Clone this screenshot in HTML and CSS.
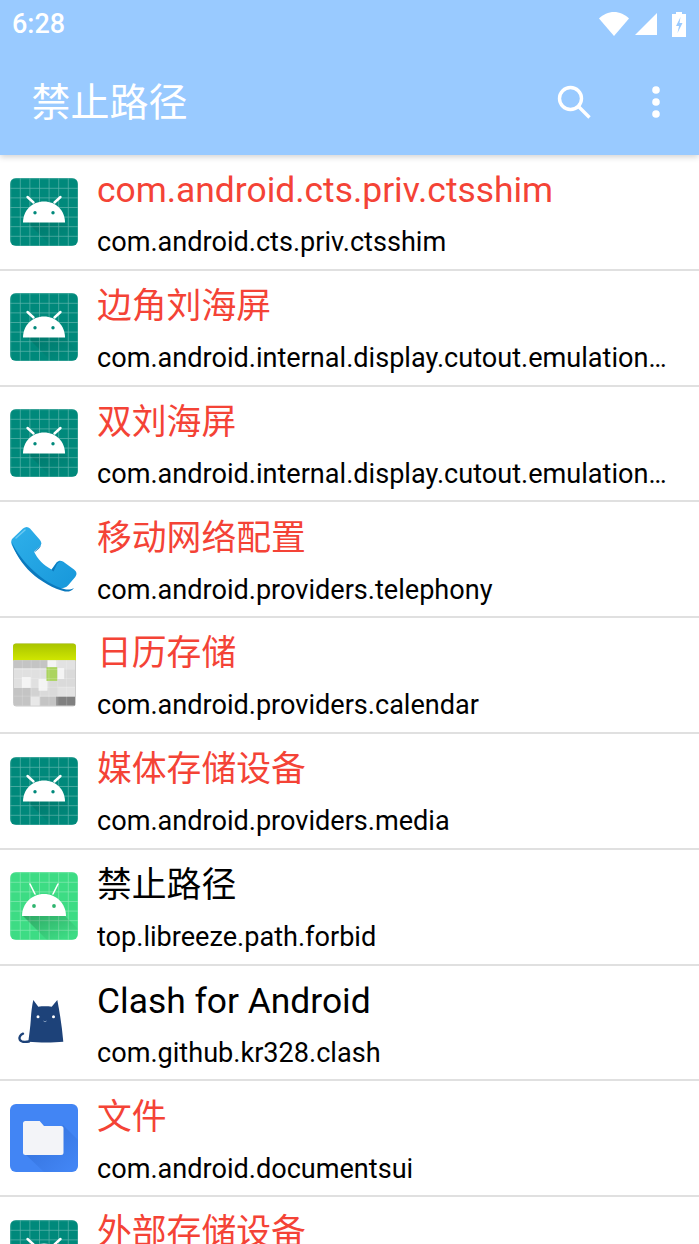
FILE: index.html
```html
<!DOCTYPE html>
<html lang="zh">
<head>
<meta charset="utf-8">
<title>禁止路径</title>
<link rel="stylesheet" href="styles.css">
</head>
<body>
<svg class="defs" width="0" height="0" aria-hidden="true">
  <defs>
    <pattern id="grid" width="9.6" height="9.6" patternUnits="userSpaceOnUse" x="0.2" y="0.2">
      <path d="M0 0V9.6M0 0H9.6" stroke="#fff" stroke-opacity=".36" stroke-width="1.400" fill="none"/>
    </pattern>
    <linearGradient id="shade" x1="0" y1="0" x2="1" y2="1">
      <stop offset="0" stop-color="#000" stop-opacity=".13"/>
      <stop offset=".8" stop-color="#000" stop-opacity="0"/>
    </linearGradient>
    <linearGradient id="shade-light" x1="0" y1="0" x2="1" y2="1">
      <stop offset="0" stop-color="#000" stop-opacity=".24"/>
      <stop offset=".85" stop-color="#000" stop-opacity="0"/>
    </linearGradient>
    <symbol id="droid-dark" viewBox="0 0 68 68">
      <rect width="68" height="68" rx="6" fill="#00897b"/>
      <rect width="68" height="68" rx="6" fill="url(#grid)"/>
      <path d="M17 44h37l12 12v12H41z" fill="url(#shade)"/>
      <path d="M17.500 19l6 5.500M50.500 19l-6 5.500" stroke="#fff" stroke-width="2.400" stroke-linecap="round"/>
      <path d="M13 44.500c0-12 9-21 21-21s21 9 21 21z" fill="#fff"/>
      <circle cx="25" cy="34.800" r="1.700" fill="#00897b"/>
      <circle cx="43" cy="34.800" r="1.700" fill="#00897b"/>
    </symbol>
    <symbol id="droid-light" viewBox="0 0 68 68">
      <rect width="68" height="68" rx="6" fill="#3ddc84"/>
      <rect width="68" height="68" rx="6" fill="url(#grid)"/>
      <path d="M13 44h42l13 13v11H37z" fill="url(#shade-light)"/>
      <path d="M20 12l5 10M48 12l-5 10" stroke="#fff" stroke-width="1.600" stroke-linecap="round"/>
      <path d="M12 44c0-12 9.500-22 22-22s22 10 22 22z" fill="#fff"/>
      <circle cx="24" cy="34" r="1.900" fill="#2fb56f"/>
      <circle cx="44" cy="34" r="1.900" fill="#2fb56f"/>
    </symbol>
    <linearGradient id="phone-g" x1="0" y1="0" x2="1" y2="1">
      <stop offset="0" stop-color="#2fb0ea"/>
      <stop offset="1" stop-color="#1797da"/>
    </linearGradient>
    <symbol id="phone" viewBox="0 0 68 68">
      <path d="M2 14 13 3.500c2.500-2 5-2 7 0l10 11.500c1.800 2.200 1.700 4.500 0 6.500l-6 5c3 7 10 14 17.500 18l5-7c2-2 4-2.200 6.500-1l11 8c3 2.300 3.200 5 1.200 7.500l-7 8.200c-3 3-6 3.500-10 2.700C37 59 24 51 15 40 8 31 3.500 24 1.500 19c-.5-2-.3-3.500.5-5z" fill="url(#phone-g)"/>
      <path d="M1.700 17C4 27 12 39 21 47.500S44 64 55 66.500c4 .5 6.500-.5 9-3.500-3 1.500-5.500 2-9 1.300-11-2.800-22-9.500-31-18S6.500 28 1.700 17z" fill="#0b79bd"/>
      <path d="M24 27l6-5.500c1-1 1.500-2.500 1-4 .5 3-.5 4.500-2 6l-3.500 3zM41.500 45l5-7c1-1.200 2.500-1.700 4-1.500-1.500.5-2.500 1.200-3.500 2.500l-3.500 7.500z" fill="#0b79bd"/>
      <path d="M6 13 15 5" stroke="#6cc9f3" stroke-width="1.500" stroke-linecap="round" fill="none"/>
    </symbol>
    <linearGradient id="cal-top" x1="0" y1="0" x2="0" y2="1">
      <stop offset="0" stop-color="#a9c400"/>
      <stop offset="1" stop-color="#cfe600"/>
    </linearGradient>
    <symbol id="calendar" viewBox="0 0 64 64">
      <rect x=".5" y=".5" width="63" height="63" rx="2.500" fill="#dadada" stroke="#cbcbcb"/>
      <path d="M0 3a3 3 0 0 1 3-3h58a3 3 0 0 1 3 3v14H0z" fill="url(#cal-top)"/>
      <path d="M1 17h35v8H1zM1 45h17v18H1zM27 54h18v9H27z" fill="#c4c4c4"/>
      <path d="M1 25h35v20H1z" fill="#e0e0e0"/>
      <path d="M44 17h19v9H44zM46 44h17v10H46z" fill="#e2e2e2"/>
      <path d="M44 54h19v9H44z" fill="#808080"/>
      <path d="M18 45h9v18h-9z" fill="#d2d2d2"/>
      <path d="M18 54h9v9h-9z" fill="#e8e8e8"/>
      <path d="M35 17h9v9h-9zM45 25h7v11h-7zM9 34h9v11H9zM26 36h9v12h-9z" fill="#f4f4f4"/>
      <path d="M34 24h11v14H34z" fill="#abd45e"/>
      <path d="M9.500 17v46M18.500 17v46M27.500 17v46M36.500 17v46M45.500 17v46M54.500 17v46M1 26.500h62M1 35.500h62M1 44.500h62M1 53.500h62" stroke="#fff" stroke-opacity=".25" stroke-width=".7"/>
    </symbol>
    <symbol id="cat" viewBox="0 0 68 68">
      <path d="M23.300 12l5 6.700c4-.6 9.500-.6 13.400 0l5.600-6.700c2.500 13 4.800 27 6 41.700-10 1-24 1-35 0 1-7 2-15 2.500-22 .3-6 1-13 2.500-19.700z" fill="#1d4279"/>
      <path d="M19 53.500c-4 .7-8 .4-9.200-1.800s.6-5 3.200-6" fill="none" stroke="#1d4279" stroke-width="2.400" stroke-linecap="round"/>
      <circle cx="28" cy="28.700" r="1.500" fill="#fff"/>
      <circle cx="43.500" cy="28.700" r="1.500" fill="#fff"/>
      <path d="M33.500 33l1.500.8 1.500-.8" stroke="#8aa0c0" stroke-width=".9" fill="none"/>
    </symbol>
    <linearGradient id="folder-shade" x1="0" y1="0" x2="1" y2="1">
      <stop offset="0" stop-color="#1a4fb0" stop-opacity=".4"/>
      <stop offset=".9" stop-color="#1a4fb0" stop-opacity="0"/>
    </linearGradient>
    <symbol id="folder" viewBox="0 0 68 68">
      <rect width="68" height="68" rx="6" fill="#4285f4"/>
      <path d="M53 21l15 15v26a6 6 0 0 1-6 6H34L15 50z" fill="url(#folder-shade)"/>
      <path d="M15.500 17h14.200l4.300 5h17a2.500 2.500 0 0 1 2.500 2.500v24a2.500 2.500 0 0 1-2.500 2.500h-35.500a2.500 2.500 0 0 1-2.500-2.500v-29a2.500 2.500 0 0 1 2.500-2.500z" fill="#f3f4f8"/>
    </symbol>
  </defs>
</svg>

<div class="phone">
  <header class="appbar">
    <div class="statusbar">
      <span class="clock">6:28</span>
      <div class="status-icons">
        <svg class="ic-wifi" viewBox="0 0 30 24"><path d="M0 6.500C4 2.500 9.500 0 15 0s11 2.500 15 6.500L15 24z" fill="#fff"/></svg>
        <svg class="ic-signal" viewBox="0 0 22 22"><path d="M22 0v22H0z" fill="#fff"/></svg>
        <svg class="ic-battery" viewBox="0 0 14 25"><path d="M4 0h6v2h4v23H0V2h4z" fill="#fff"/><path d="M8.500 5 4 14h3l-1.500 7L10.500 11H7.500z" fill="#99caff"/></svg>
      </div>
    </div>
    <div class="toolbar">
      <h1 class="app-title">禁止路径</h1>
      <div class="actions">
        <svg class="ic-search" viewBox="0 0 34 34"><circle cx="13.500" cy="13.500" r="11" fill="none" stroke="#fff" stroke-width="3.400"/><path d="M21.500 21.500 32.500 32.500" stroke="#fff" stroke-width="3.400"/></svg>
        <svg class="ic-more" viewBox="0 0 8 32"><circle cx="4" cy="4" r="3.800" fill="#fff"/><circle cx="4" cy="16" r="3.800" fill="#fff"/><circle cx="4" cy="28" r="3.800" fill="#fff"/></svg>
      </div>
    </div>
  </header>

  <ul class="app-list">
    <li class="row"><svg class="app-icon"><use href="#droid-dark"/></svg><div class="row-text"><div class="name blocked">com.android.cts.priv.ctsshim</div><div class="pkg">com.android.cts.priv.ctsshim</div></div></li>
    <li class="row"><svg class="app-icon"><use href="#droid-dark"/></svg><div class="row-text"><div class="name cjk blocked">边角刘海屏</div><div class="pkg">com.android.internal.display.cutout.emulation.corner</div></div></li>
    <li class="row"><svg class="app-icon"><use href="#droid-dark"/></svg><div class="row-text"><div class="name cjk blocked">双刘海屏</div><div class="pkg">com.android.internal.display.cutout.emulation.double</div></div></li>
    <li class="row"><svg class="app-icon"><use href="#phone"/></svg><div class="row-text"><div class="name cjk blocked">移动网络配置</div><div class="pkg">com.android.providers.telephony</div></div></li>
    <li class="row"><svg class="app-icon cal"><use href="#calendar"/></svg><div class="row-text"><div class="name cjk blocked">日历存储</div><div class="pkg">com.android.providers.calendar</div></div></li>
    <li class="row"><svg class="app-icon"><use href="#droid-dark"/></svg><div class="row-text"><div class="name cjk blocked">媒体存储设备</div><div class="pkg">com.android.providers.media</div></div></li>
    <li class="row"><svg class="app-icon"><use href="#droid-light"/></svg><div class="row-text"><div class="name cjk">禁止路径</div><div class="pkg">top.libreeze.path.forbid</div></div></li>
    <li class="row"><svg class="app-icon"><use href="#cat"/></svg><div class="row-text"><div class="name">Clash for Android</div><div class="pkg">com.github.kr328.clash</div></div></li>
    <li class="row"><svg class="app-icon"><use href="#folder"/></svg><div class="row-text"><div class="name cjk blocked">文件</div><div class="pkg">com.android.documentsui</div></div></li>
    <li class="row"><svg class="app-icon"><use href="#droid-dark"/></svg><div class="row-text"><div class="name cjk blocked">外部存储设备</div><div class="pkg">com.android.externalstorage</div></div></li>
  </ul>
</div>
</body>
</html>
```
FILE: styles.css
```css
* {
  box-sizing: border-box;
}

html,
body {
  margin: 0;
  padding: 0;
  height: 100%;
  overflow: hidden;
  background: #fff;
}

.defs {
  position: absolute;
}

.phone {
  width: 699px;
  height: 1244px;
  overflow: hidden;
  font-family: Roboto, "Noto Sans CJK SC", sans-serif;
}

.appbar {
  position: relative;
  z-index: 1;
  height: 155px;
  background: #99caff;
  box-shadow: 0 2px 6px rgba(0, 0, 0, 0.18);
}

.statusbar {
  height: 50px;
  display: flex;
  justify-content: space-between;
  align-items: center;
  padding: 0 13px 2px 12px;
}

.clock {
  color: #fff;
  font-size: 27px;
  font-weight: 500;
}

.status-icons {
  display: flex;
  align-items: center;
  gap: 6px;
}

.ic-wifi {
  width: 30px;
  height: 24px;
}

.ic-signal {
  width: 22px;
  height: 22px;
}

.ic-battery {
  width: 14px;
  height: 25px;
  margin-left: 9px;
}

.toolbar {
  height: 105px;
  display: flex;
  justify-content: space-between;
  align-items: center;
  padding: 0 39px 0 31.5px;
}

.app-title {
  margin: 0;
  color: #fff;
  font-size: 39px;
  font-weight: 400;
  line-height: 1;
  position: relative;
  top: 1px;
}

.actions {
  display: flex;
  align-items: center;
  gap: 61px;
}

.ic-search {
  width: 34px;
  height: 34px;
  position: relative;
  top: -1px;
}

.ic-more {
  width: 8px;
  height: 32px;
  position: relative;
  top: -1px;
}

.app-list {
  margin: 0;
  padding: 0;
  list-style: none;
}

.row {
  height: 115.8px;
  display: flex;
  align-items: flex-start;
  padding: 22.6px 0 0 10px;
  border-bottom: 2px solid #e0e0e0;
}

.app-icon {
  flex: none;
  width: 68px;
  height: 68px;
}

.app-icon.cal {
  width: 63px;
  height: 64px;
  margin: 2px 2px 2px 3px;
}

.row-text {
  flex: 1;
  min-width: 0;
  margin: -12.4px 0 0 19px;
  padding-right: 31px;
}

.name {
  height: 50px;
  font-size: 35.4px;
  line-height: 50px;
  color: #000;
  white-space: nowrap;
}

.name.cjk {
  font-size: 34.8px;
}

.name.blocked {
  color: #f44336;
}

.pkg {
  margin-top: 8px;
  font-size: 27.1px;
  line-height: 38px;
  color: #000;
  white-space: nowrap;
  overflow: hidden;
  text-overflow: ellipsis;
}
```
